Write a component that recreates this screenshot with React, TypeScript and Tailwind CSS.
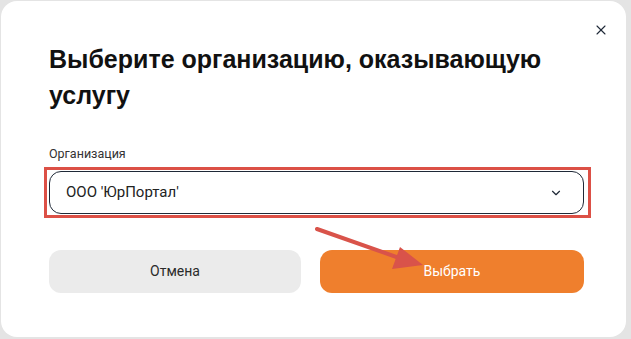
import { X, ChevronDown } from "lucide-react";

export default function App() {
  return (
    <div className="w-[631px] h-[339px] bg-[#e4e4e4] p-px font-['Roboto',sans-serif]">
      <div className="relative h-[336px] w-[625px] rounded-2xl bg-white pl-[48px] pr-[42px] pt-[40px]">
        <button className="absolute right-[17px] top-[21px] text-[#1f2937]">
          <X className="h-[16px] w-[16px]" strokeWidth={1.6} />
        </button>

        <h2 className="font-['Liberation_Sans',Arial,sans-serif] text-[25px] font-bold leading-[36px] text-[#111]">
          Выберите организацию, оказывающую услугу
        </h2>

        <div className="mt-[33px] text-[12.5px] leading-[16px] text-[#333]">Организация</div>

        <div className="mt-[5px] -ml-[5px] -mr-[7px] border-[3px] border-[#dc5046] pl-[2px] pr-[4px] py-[1px]">
          <div className="flex h-[43px] items-center justify-between rounded-xl border border-[#1f2937] pl-[16px] pr-[20px] text-[15px] text-[#222]">
            <span>ООО 'ЮрПортал'</span>
            <ChevronDown className="h-[14px] w-[14px] text-[#1f2937]" strokeWidth={2} />
          </div>
        </div>

        <div className="mt-[32px] flex gap-[19px]">
          <button className="h-[43px] w-[252px] rounded-xl bg-[#ebebeb] text-[14px] text-[#2a2a2a]">
            Отмена
          </button>
          <button className="h-[43px] w-[264px] rounded-xl bg-[#ef7f2d] text-[14px] text-white">
            Выбрать
          </button>
        </div>

        {/* annotation arrow */}
        <svg className="absolute left-0 top-0" width="625" height="336" viewBox="0 0 625 336">
          <line x1="316" y1="228" x2="404" y2="259" stroke="#d9534a" strokeWidth="4" strokeLinecap="round" />
          <polygon points="422,264 399,246 391,268" fill="#d9534a" />
        </svg>
      </div>
    </div>
  );
}
